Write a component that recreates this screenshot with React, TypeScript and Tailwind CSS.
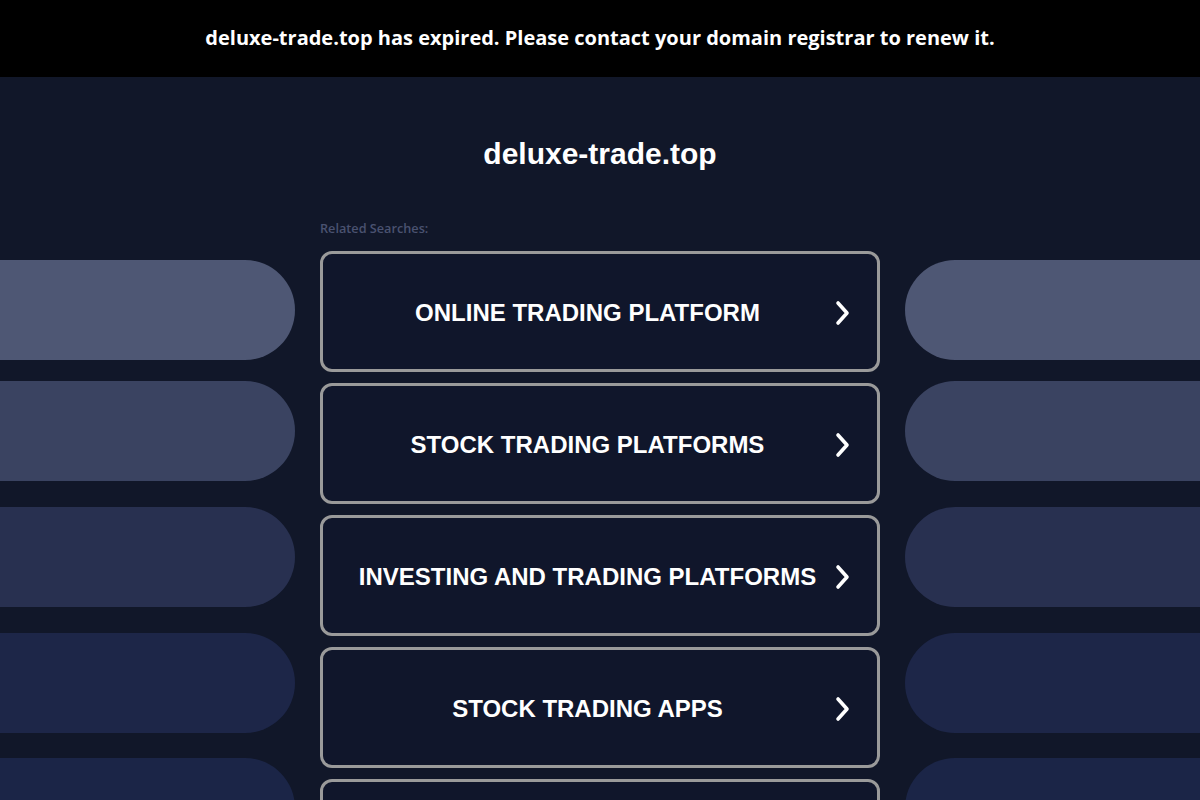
import React from "react";

const pillColors = ["bg-[#4e5774]", "bg-[#3a4361]", "bg-[#283050]", "bg-[#1d2648]", "bg-[#1b2547]"];
const pillMargins = ["mt-[260px]", "mt-[21px]", "mt-[26px]", "mt-[26px]", "mt-[25px]"];

const items = [
  "ONLINE TRADING PLATFORM",
  "STOCK TRADING PLATFORMS",
  "INVESTING AND TRADING PLATFORMS",
  "STOCK TRADING APPS",
  "",
];

function Chevron() {
  return (
    <svg width="24" height="28" viewBox="0 0 24 28" className="shrink-0">
      <path d="M7 4 L16 14 L7 24" fill="none" stroke="white" strokeWidth="3.6" strokeLinecap="round" strokeLinejoin="round" />
    </svg>
  );
}

function Pills({ side }: { side: "left" | "right" }) {
  return (
    <div className="flex flex-col w-[295px] shrink-0">
      {pillColors.map((c, i) => (
        <div
          key={i}
          className={`${pillMargins[i]} h-[100px] shrink-0 ${c} ${side === "left" ? "rounded-r-[50px]" : "rounded-l-[50px]"}`}
        />
      ))}
    </div>
  );
}

export default function App() {
  return (
    <div className="w-[1200px] h-[800px] overflow-hidden bg-[#111729] flex flex-col">
      <div className="h-[77px] bg-black flex items-center justify-center shrink-0">
        <p className="text-white font-bold text-[20px] pb-[1px]" style={{ fontFamily: '"Open Sans", "Noto Sans", sans-serif' }}>
          deluxe-trade.top has expired. Please contact your domain registrar to renew it.
        </p>
      </div>
      <div className="relative flex-1">
        <div className="absolute inset-0 flex justify-between -mt-[77px]">
          <Pills side="left" />
          <Pills side="right" />
        </div>
        <div className="relative flex flex-col items-center">
          <h1
            className="mt-[59px] text-white font-bold text-[30px] leading-[36px] h-[36px]"
            style={{ fontFamily: '"Liberation Sans", Arial, sans-serif' }}
          >
            deluxe-trade.top
          </h1>
          <div className="w-[560px] mt-[48px]">
            <p
              className="text-[12.7px] font-semibold text-[#4a5270] leading-[16px]"
              style={{ fontFamily: '"Open Sans", "Noto Sans", sans-serif' }}
            >
              Related Searches:
            </p>
            <div className="flex flex-col gap-[11px] mt-[15px]">
              {items.map((t, i) => (
                <div
                  key={i}
                  className="h-[121px] border-[3px] border-[#9a9a9a] rounded-[12px] bg-[#10162b] flex items-center pl-[23px] pr-[22px] pt-[2px] shrink-0"
                >
                  <span
                    className="flex-1 text-center text-white font-bold text-[24px] mr-[2px]"
                    style={{ fontFamily: '"Liberation Sans", Arial, sans-serif' }}
                  >
                    {t}
                  </span>
                  <Chevron />
                </div>
              ))}
            </div>
          </div>
        </div>
      </div>
    </div>
  );
}
